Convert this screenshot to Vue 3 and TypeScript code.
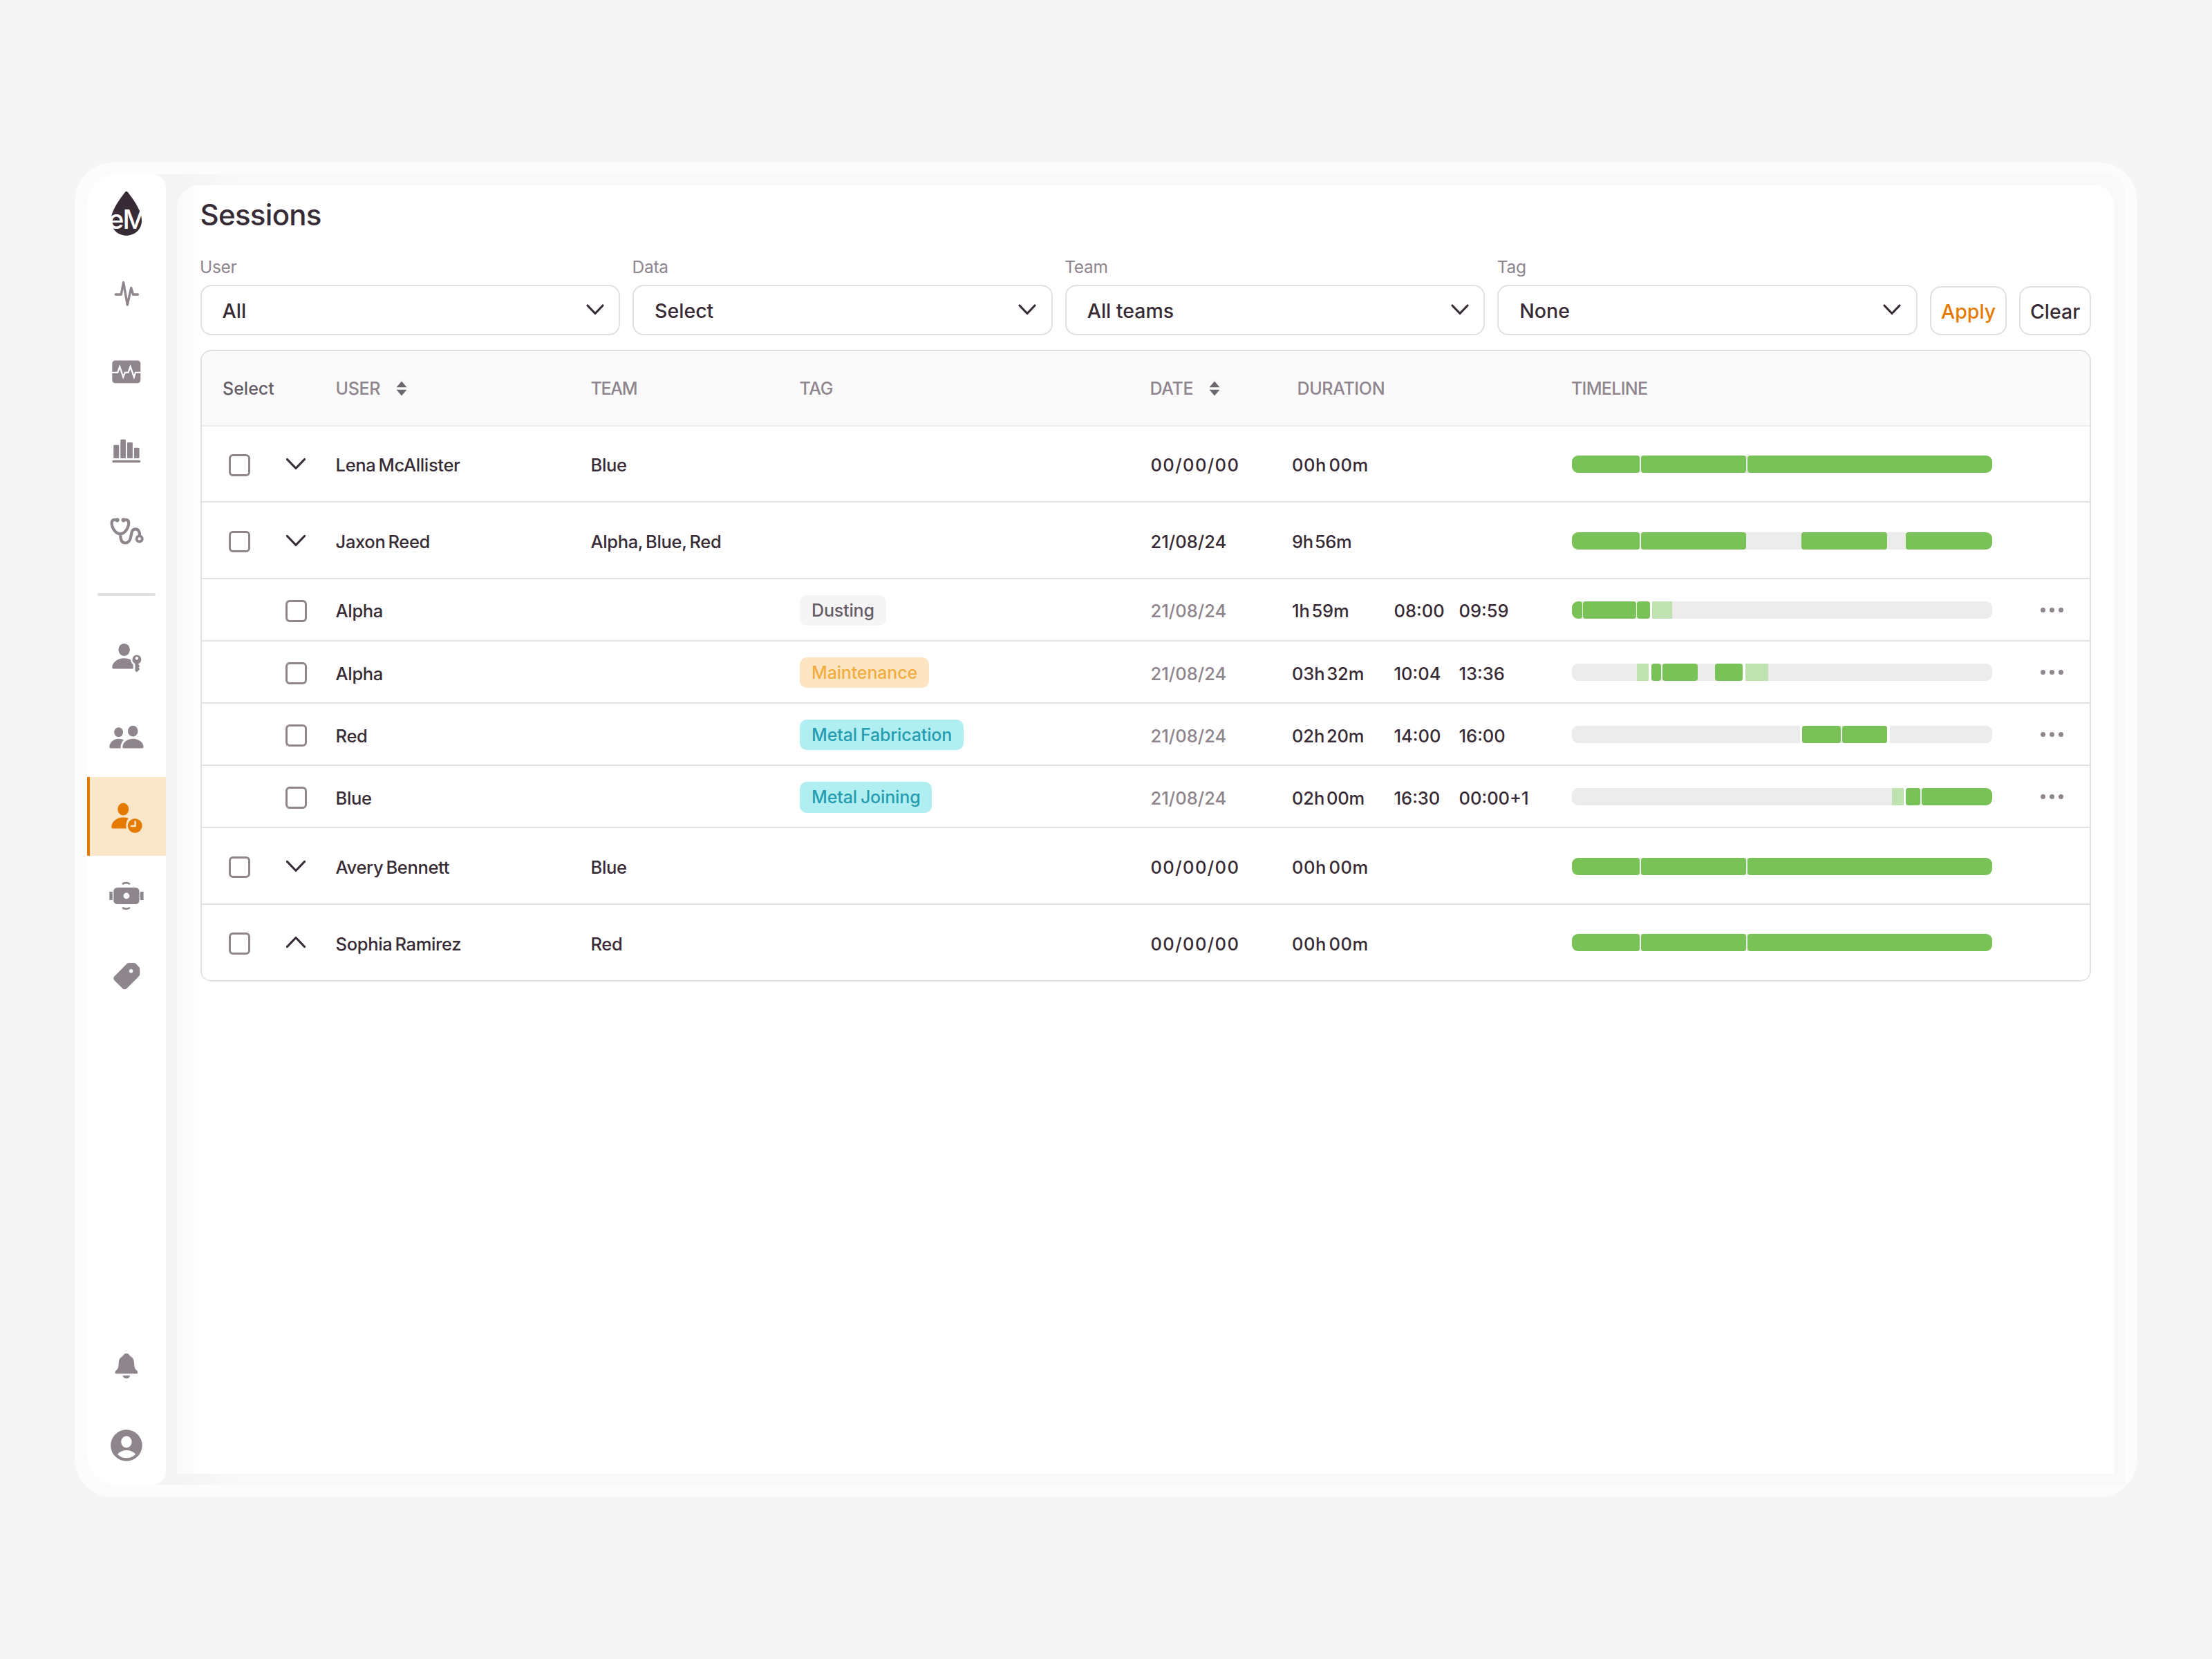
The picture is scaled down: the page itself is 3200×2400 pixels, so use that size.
<script setup lang="ts">
type Kind = 'on' | 'soft' | 'rest' | 'gap'
type Segment = [Kind, number]

interface Row {
  child?: boolean
  open?: boolean
  name: string
  team?: string
  tag?: string
  tone?: string
  date: string
  duration: string
  start?: string
  end?: string
  segments: Segment[]
}

const filters = [
  { label: 'User', value: 'All' },
  { label: 'Data', value: 'Select' },
  { label: 'Team', value: 'All teams' },
  { label: 'Tag', value: 'None' },
]

const full: Segment[] = [['on', 98.4], ['rest', 1.8], ['on', 151.4], ['rest', 2.2], ['on', 354.6]]

const rows: Row[] = [
  { name: 'Lena McAllister', team: 'Blue', date: '00/00/00', duration: '00h 00m', segments: full },
  {
    name: 'Jaxon Reed', team: 'Alpha, Blue, Red', date: '21/08/24', duration: '9h 56m',
    segments: [['on', 98.4], ['rest', 1.8], ['on', 151.6], ['rest', 80.1], ['on', 124.5], ['rest', 26.9], ['on', 125.1]],
  },
  {
    child: true, name: 'Alpha', tag: 'Dusting', tone: 'grey', date: '21/08/24', duration: '1h 59m', start: '08:00', end: '09:59',
    segments: [['on', 14.6], ['rest', 1.6], ['on', 76.4], ['rest', 1.4], ['on', 18.7], ['gap', 3.6], ['soft', 29.1], ['rest', 263]],
  },
  {
    child: true, name: 'Alpha', tag: 'Maintenance', tone: 'amber', date: '21/08/24', duration: '03h 32m', start: '10:04', end: '13:36',
    segments: [['rest', 93.8], ['soft', 17], ['gap', 3.8], ['on', 14.4], ['rest', 2.1], ['on', 51], ['rest', 24.7], ['on', 40.6], ['gap', 3.8], ['soft', 32.9], ['rest', 324.3]],
  },
  {
    child: true, name: 'Red', tag: 'Metal Fabrication', tone: 'cyan', date: '21/08/24', duration: '02h 20m', start: '14:00', end: '16:00',
    segments: [['rest', 330.2], ['gap', 3.3], ['on', 55.4], ['rest', 2.2], ['on', 65.3], ['gap', 3.8], ['rest', 148.2]],
  },
  {
    child: true, name: 'Blue', tag: 'Metal Joining', tone: 'cyan', date: '21/08/24', duration: '02h 00m', start: '16:30', end: '00:00+1',
    segments: [['rest', 463], ['soft', 17], ['gap', 3.3], ['on', 20.3], ['rest', 2.7], ['on', 102.1]],
  },
  { name: 'Avery Bennett', team: 'Blue', date: '00/00/00', duration: '00h 00m', segments: full },
  { open: true, name: 'Sophia Ramirez', team: 'Red', date: '00/00/00', duration: '00h 00m', segments: full },
]

const isEmpty = (r: Row) => r.date === '00/00/00'
</script>

<template>
  <div class="page">
    <div class="frame">
      <div class="inner">
        <aside class="sidebar">
          <svg class="logo" viewBox="0 0 60 72">
            <path d="M27.7 8.2Q29.9 5.2 32.1 8.2C40 18.500 52.200 35 52.200 48.700C52.200 61.500 42.200 70.700 29.900 70.700C17.600 70.700 7.600 61.500 7.600 48.700C7.600 35 19.800 18.500 27.700 8.200Z" fill="#372b36" />
            <text x="3.800" y="60.700" class="mark">e</text>
            <text x="24.500" y="60.700" class="mark">M</text>
          </svg>
          <nav class="nav">
            <a class="item"><svg viewBox="0 0 60 60"><path class="line" d="M14.2 31H22.300L25.600 13.500L31.300 46L36.700 21.500L39.500 31H46.400" stroke-width="3.400" /></svg></a>
            <a class="item"><svg viewBox="0 0 60 60"><rect x="9.300" y="12.500" width="41" height="32.700" rx="4.500" /><path d="M9 29.800H17.250L20.250 21.500L25.250 36.500L27.900 29.800H32.600L35.600 21.500L40.900 36.500L43 29.800H50.500" fill="none" stroke="#fff" stroke-width="2.300" /></svg></a>
            <a class="item"><svg viewBox="0 0 60 60"><rect x="11.250" y="19.700" width="8" height="19.300" rx="1.200" /><rect x="21.250" y="11.700" width="7.700" height="27.300" rx="1.200" /><rect x="30.900" y="16" width="8" height="23" rx="1.200" /><rect x="40.900" y="23.700" width="7.700" height="15.300" rx="1.200" /><rect x="9.250" y="41.800" width="41" height="3.500" rx="1.700" /></svg></a>
            <a class="item"><svg viewBox="0 0 60 60"><path class="line" stroke-width="4.200" d="M16 13.300C11.500 12 8.600 13.500 8.600 17.700C8.600 25 14.500 33.300 20.900 33.300C27.300 33.300 33.200 25 33.200 17.700C33.200 13.500 30.300 12 25.800 13.300M21.200 34C21.200 41 22.500 46.500 28.250 46.500C34 46.500 35.700 42 36.600 36C37.400 30 38.500 26.300 43 26.300C47.500 26.300 49 29.500 49 35.500" /><circle cx="16.600" cy="13.300" r="3.100" /><circle cx="25.600" cy="13.300" r="3.100" /><circle class="line" cx="48.700" cy="40.400" r="4.100" stroke-width="3.800" /></svg></a>
          </nav>
          <div class="divider"></div>
          <nav class="nav">
            <a class="item"><svg viewBox="0 0 60 60"><ellipse cx="26.600" cy="17.900" rx="8.300" ry="9" /><path d="M9.250 43.500C9.250 36.500 17 30.300 26.600 30.300C30.200 30.300 33.300 31.100 35.900 32.300C36 35.500 37.300 37.700 39.600 39.300V45.600H11.200Q9.250 45.600 9.250 43.500Z" /><path fill-rule="evenodd" d="M44.900 25.400A6.700 6.700 0 0 1 47.400 38.200V39.600L49.400 41.500L47.500 43.600L49.200 46L47 48.600L44.900 50.300L42.500 48.600V38.200A6.700 6.700 0 0 1 44.900 25.400ZM44.900 28.100A2.200 2.200 0 1 0 44.900 32.500A2.200 2.200 0 1 0 44.900 28.100Z" /></svg></a>
            <a class="item"><svg viewBox="0 0 60 60"><ellipse cx="18.600" cy="22.300" rx="6.400" ry="7" /><path d="M5.250 43.800C5.250 37.500 11 31.700 18.600 31.700C21.500 31.700 24 32.400 26 33.600C22.700 36.800 21.200 41 21.600 45.600H7Q5.250 45.600 5.250 43.800Z" /><ellipse cx="39.250" cy="20.700" rx="7.200" ry="8" /><path d="M24.250 43.800C24.250 37.500 30.500 31.700 39.400 31.700C48.300 31.700 54.600 37.500 54.600 43.800Q54.600 45.600 52.800 45.600H26Q24.250 45.600 24.250 43.800Z" /></svg></a>
            <a class="item active"><svg viewBox="0 0 60 60"><ellipse cx="25.250" cy="19.600" rx="8" ry="9" /><path d="M8.250 45.500C8.250 38 15.500 31.600 25.250 31.600C28.200 31.600 30.800 32.100 33 33C30 36 28.600 41.500 29.800 47.600H10.200Q8.250 47.600 8.250 45.500Z" /><circle cx="42.250" cy="43.600" r="10.400" /><path d="M42.600 37.500V44H36.800" fill="none" stroke="#fae6c9" stroke-width="2.500" stroke-linecap="round" /></svg></a>
            <a class="item"><svg viewBox="0 0 60 60"><path fill-rule="evenodd" d="M17.500 18H42.500Q48.600 18 48.600 24V36Q48.600 42 42.500 42H17.500Q11.250 42 11.250 36V24Q11.250 18 17.500 18ZM29.900 25.600A4.400 4.400 0 1 0 29.900 34.400A4.400 4.400 0 1 0 29.900 25.600Z" /><rect x="5.300" y="24" width="4.500" height="12" /><rect x="50" y="24" width="4.600" height="12" /><path class="line" stroke-width="2.800" d="M24.800 12.400Q29.500 9.900 34 12.400M24.800 47.600Q29.500 50.100 34 47.600" /></svg></a>
            <a class="item"><svg viewBox="0 0 60 60"><path fill-rule="evenodd" d="M33.500 13H40.300Q42.250 13 43.600 14.300L48 18.700Q49.250 20 49.250 21.700V29.200Q49.250 31 48 32.300L30 50.200Q27.300 52.400 24.500 50.200L12.200 37.900Q10.200 35.300 12.200 32.700L30.200 14.600Q31.600 13 33.500 13ZM36.600 22A2.700 2.700 0 1 0 36.600 27.400A2.700 2.700 0 1 0 36.600 22Z" /></svg></a>
          </nav>
          <nav class="nav bottom">
            <a class="item"><svg viewBox="0 0 60 60"><path d="M29.900 12C26.800 12 25.500 13.900 25 15.500C20.500 17.800 18.800 21 18.600 27C18.400 32.500 17.500 34.500 14.500 37C12.900 38.800 13.400 41.300 15.500 41.300H44.300C46.400 41.300 46.900 38.800 45.300 37C42.300 34.500 41.400 32.500 41.200 27C41 21 39.300 17.800 34.800 15.500C34.300 13.900 33 12 29.900 12ZM24.600 43.700H35.200C35 46.300 32.800 48.200 29.900 48.200C27 48.200 24.800 46.300 24.600 43.700Z" /></svg></a>
            <a class="item"><svg viewBox="0 0 60 60"><circle cx="29.900" cy="30" r="22.800" /><ellipse cx="29.900" cy="25" rx="7.700" ry="8.400" fill="#fff" /><path d="M17 42.700C23.500 35.200 36.800 35.200 43.200 42.700C36.300 50.100 23.500 50.100 17 42.700Z" fill="#fff" /></svg></a>
          </nav>
        </aside>

        <main class="main">
          <h1>Sessions</h1>
          <div class="filters">
            <div v-for="f in filters" :key="f.label" class="field">
              <label>{{ f.label }}</label>
              <div class="select">
                <span>{{ f.value }}</span>
                <svg class="chev" viewBox="0 0 28 18"><path d="M3 3L14 14.500L25 3" /></svg>
              </div>
            </div>
            <button class="btn apply">Apply</button>
            <button class="btn clear">Clear</button>
          </div>

          <section class="table">
            <div class="row head">
              <div class="pick">Select</div>
              <div class="sortable">USER<svg class="sort" viewBox="0 0 16 22"><path d="M8 .500L15.500 9.200H.500ZM8 21.500L15.500 12.800H.500Z" /></svg></div>
              <div class="tight">TEAM</div>
              <div>TAG</div>
              <div class="sortable">DATE<svg class="sort" viewBox="0 0 16 22"><path d="M8 .500L15.500 9.200H.500ZM8 21.500L15.500 12.800H.500Z" /></svg></div>
              <div class="dur">DURATION</div>
              <div></div>
              <div></div>
              <div class="slim">TIMELINE</div>
            </div>
            <div v-for="(r, i) in rows" :key="i" class="row" :class="{ child: r.child, empty: isEmpty(r) }">
              <div class="pick">
                <span class="box"></span>
                <svg v-if="!r.child" class="chev" :class="{ up: r.open }" viewBox="0 0 28 18"><path d="M1.500 2.500L14 15.500L26.500 2.500" /></svg>
              </div>
              <div class="name">{{ r.name }}</div>
              <div class="name">{{ r.team }}</div>
              <div><span v-if="r.tag" class="chip" :class="r.tone">{{ r.tag }}</span></div>
              <div class="date">{{ r.date }}</div>
              <div class="num">{{ r.duration }}</div>
              <div>{{ r.start }}</div>
              <div>{{ r.end }}</div>
              <div class="bar"><i v-for="(s, k) in r.segments" :key="k" :class="s[0]" :style="{ width: s[1] + 'px' }"></i></div>
              <div v-if="r.child" class="dots"><b></b><b></b><b></b></div>
            </div>
          </section>
        </main>
      </div>
    </div>
  </div>
</template>

<style>
body { background: #f5f5f5; }
</style>

<style scoped>
* { box-sizing: border-box; }
.page {
  width: 3200px; height: 2400px; padding: 235px 108px;
  background: #f5f5f5; color: #372b36;
  font-family: Inter, "Noto Sans", sans-serif; font-weight: 500;
}
.frame { height: 1930.500px; padding: 17px 18px 17.500px 17.500px; border-radius: 56px; background: #fcfcfc; }
.inner {
  height: 100%; display: flex; border-radius: 40px 28px 0 40px; overflow: hidden;
  background: linear-gradient(to right, #f4f4f4 0, #f4f4f4 130px, #f9f9f9 220px, #f9f9f9 100%);
}
.sidebar {
  width: 114.500px; flex: none; display: flex; flex-direction: column; align-items: stretch;
  background: #fff; border-radius: 40px 20px 20px 40px;
}
.logo { width: 60px; height: 72px; margin: 18px 0 25.500px 27.250px; }
.mark { font-family: Inter, sans-serif; font-size: 38.500px; font-weight: 500; fill: #fff; }
.item { height: 114.650px; display: flex; align-items: center; justify-content: center; }
.item svg { width: 60px; height: 60px; fill: #8e858d; }
.item .line { fill: none; stroke: #8e858d; stroke-linecap: round; stroke-linejoin: round; }
.active { background: #fae6c9; border-left: 4px solid #e57a00; }
.active svg { fill: #e57a00; margin-left: -4px; }
.divider { height: 4px; margin: 32px 15.500px 32.500px; border-radius: 2px; background: #e2dfe2; }
.bottom { margin-top: auto; }

.main {
  flex: none; width: 2802px; height: 1864px; margin: 16px 0 0 16px; padding: 0 33px 0 33.500px;
  border-radius: 32px 28px 0 0;
  background: linear-gradient(to right, #fafafa 0, #fff 38px);
}
h1 { margin: 0; height: 109.500px; padding-top: 17px; font-size: 42px; line-height: 52px; font-weight: 500; letter-spacing: -.7px; }
.filters { display: flex; gap: 18px; align-items: flex-end; }
.field { width: 607.600px; }
label { display: block; height: 36px; font-size: 24.500px; line-height: 20px; color: #8e858d; font-weight: 400; letter-spacing: -.3px; text-indent: -.5px; }
.select {
  height: 73.500px; display: flex; align-items: center; justify-content: space-between;
  padding: 2px 20.500px 0 30px; border: 2px solid #e0e0e0; border-radius: 16px; background: #fff; font-size: 28.500px;
}
.filters { margin-top: -2px; }
.chev { width: 28px; height: 18px; fill: none; stroke: #372b36; stroke-width: 3.200; stroke-linecap: round; stroke-linejoin: round; }
.select .chev { margin-top: -3px; }
.up { transform: rotate(180deg); }
.btn {
  height: 71.500px; padding: 2px 0 0; display: flex; align-items: center; justify-content: center;
  border: 2px solid #e0e0e0; border-radius: 16px; background: #fff; color: #372b36; font: 500 28.500px Inter, sans-serif;
}
.apply { width: 111.500px; color: #e57a00; }
.clear { width: 103.500px; }

.table { margin-top: 21px; border: 2px solid #e0e0e0; border-bottom: 0; border-radius: 16px; overflow: hidden; background: #fff; }
.row {
  height: 110.700px; display: grid; align-items: center; padding-top: 4px; border-bottom: 2px solid #e2e2e2; font-size: 25.500px;
  grid-template-columns: 195.100px 368.900px 302px 507px 204.500px 147.500px 94px 163.500px 608.200px 1fr;
  white-space: nowrap;
}
.row:last-child { border-bottom: 2px solid #e0e0e0; border-radius: 0 0 14px 14px; }
.child { height: 90.100px; }
.head { height: 108.500px; padding-top: 1.500px; background: #fafafa; color: #8e858d; border-color: #ececec; font-size: 25px; letter-spacing: -.350px; }
.head > div { text-indent: -1px; }
.pick { display: flex; align-items: center; padding-left: 39.200px; }
.head .pick { padding-left: 31.500px; color: #655d65; letter-spacing: 0; }
.tight { letter-spacing: -1.300px; }
.slim { letter-spacing: -.700px; }
.box { width: 31.600px; height: 31.600px; border: 3px solid #8e858d; border-radius: 6px; }
.pick .chev { margin: -4px 0 0 52px; }
.child .pick { padding-left: 121.200px; }
.sortable { display: flex; align-items: center; }
.sort { width: 16px; height: 22px; margin-left: 22.500px; fill: #6d6870; }
.dur { padding-left: 8.500px; }
.name { letter-spacing: -.350px; word-spacing: -2.300px; text-indent: -1px; }
.num { word-spacing: -4px; letter-spacing: -.400px; }
.empty .num { letter-spacing: .600px; }
.empty .date { letter-spacing: 1.400px; }
.child .num { letter-spacing: -.100px; }
.child .date { color: #8e858d; }
.chip {
  display: inline-flex; align-items: center; height: 44.700px; margin-top: -2px; padding: 0 17px 0 16.500px;
  border-radius: 10px; font-size: 25px; letter-spacing: -.150px; word-spacing: -1.500px; text-indent: 0; vertical-align: middle;
}
.grey { background: #f5f5f5; color: #655d65; }
.amber { background: #fde5c3; color: #f1ad3f; }
.cyan { background: #b1eef1; color: #259cb0; }
.bar { display: flex; height: 25px; margin-top: -3px; border-radius: 9px; overflow: hidden; background: #ececec; }
.bar i { flex: none; height: 100%; }
.on { background: #79c257; border-radius: 4px; }
.soft { background: #bfe2b0; }
.gap { background: #fff; }
.dots { display: flex; gap: 5.700px; margin: -3px 0 0 69.500px; }
.dots b { width: 7.300px; height: 7.300px; border-radius: 50%; background: #8e858d; }
</style>
